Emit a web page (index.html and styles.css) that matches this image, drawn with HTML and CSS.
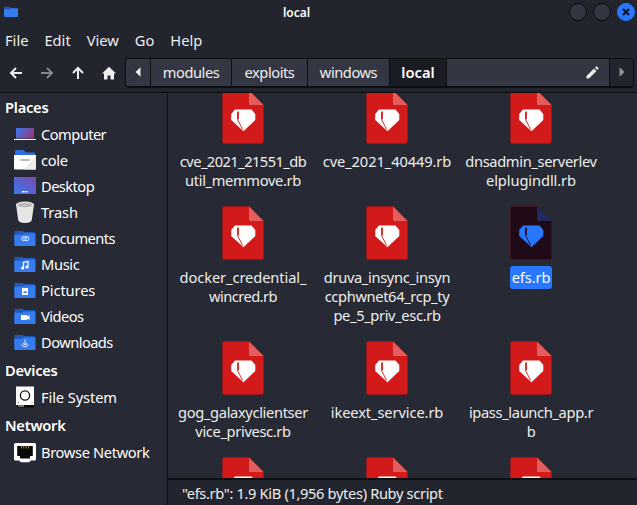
FILE: index.html
```html
<!DOCTYPE html>
<html lang="en">
<head>
<meta charset="utf-8">
<title>local</title>
<link rel="stylesheet" href="styles.css">
</head>
<body>
<svg class="defs" aria-hidden="true">
  <symbol id="ruby" viewBox="0 0 42 54">
    <path class="page" d="M2.500 .5H27L41.500 15V51.500Q41.500 53.500 39.500 53.500H2.500Q.5 53.500 .5 51.500V2.500Q.5 .5 2.500 .5Z"/>
    <path class="fold" d="M27 .5L41.500 15H28.500Q27 15 27 13.500Z"/>
    <path class="gem" d="M13 19.500H29.500L33.300 24V30L21.500 41.300L9.200 30V24Z"/>
    <path class="facet" d="M15.500 21.500V29.500L20.700 39.500M16.500 21.500V29.500"/>
  </symbol>
  <symbol id="folder" viewBox="0 0 22 16">
    <path d="M.5 1Q.5 .2 1.500 .2H8L10 1.500H21V9H.5Z" fill="#2159b8"/>
    <path d="M.3 4.300H8L10 3H21.500V14.500Q21.500 15.500 20.500 15.500H1.300Q.3 15.500 .3 14.500Z" fill="#367bf0"/>
  </symbol>
</svg>
<div class="window">
  <header class="titlebar">
    <svg class="app-icon" viewBox="0 0 14 10"><path d="M0 1Q0 0 1 0H5.500L7 1H13.500V6H0Z" fill="#2159b8"/><path d="M0 2.500H5.500L7 1.500H14V9Q14 10 13 10H1Q0 10 0 9Z" fill="#367bf0"/></svg>
    <span class="title">local</span>
    <div class="controls">
      <span class="control"></span><span class="control"></span>
      <span class="control close"><svg viewBox="0 0 8 8"><path d="M1 1L7 7M7 1L1 7" stroke="#0c1424" stroke-width="2.200"/></svg></span>
    </div>
  </header>
  <nav class="menubar"><span>File</span><span>Edit</span><span>View</span><span>Go</span><span>Help</span></nav>
  <div class="toolbar">
    <svg class="nav" viewBox="0 0 14 14"><path d="M13 7H3M7 2L2 7L7 12"/></svg>
    <svg class="nav dim" viewBox="0 0 14 14"><path d="M1 7H11M7 2L12 7L7 12"/></svg>
    <svg class="nav" viewBox="0 0 14 14"><path d="M7 13V3M2 7L7 2L12 7"/></svg>
    <svg class="nav home" viewBox="0 0 14 14"><path d="M7 .8L14 7.500H12V13.500H8.500V9.500H5.500V13.500H2V7.500H0Z"/></svg>
    <div class="pathbar">
      <span class="seg back"><svg viewBox="0 0 6 10"><path d="M5.500 .2V9.800L.5 5Z" fill="#eee"/></svg></span>
      <span class="seg modules">modules</span>
      <span class="seg exploits">exploits</span>
      <span class="seg windows">windows</span>
      <span class="seg current">local</span>
      <span class="seg entry"><svg viewBox="0 0 13 13"><path d="M.5 10L8 2.500L10.500 5L3 12.500H.5ZM9 1.500L10 .6Q10.500 .2 11 .6L12.400 2Q12.800 2.500 12.400 3L11.500 4Z" fill="#eee"/></svg></span>
      <span class="seg forward"><svg viewBox="0 0 6 10"><path d="M.5 .2V9.800L5.500 5Z" fill="#929397"/></svg></span>
    </div>
  </div>
  <div class="body">
    <aside class="sidebar">
      <h2>Places</h2>
      <ul>
        <li class="tight"><svg viewBox="0 0 22 22"><defs><linearGradient id="g" x2="1" y2=".4"><stop stop-color="#367bf0"/><stop offset="1" stop-color="#8c3a88"/></linearGradient></defs><path d="M2 5H20V15.500H2Z" fill="url(#g)"/><path d="M0 16H22V17H0Z" fill="#fff"/></svg>Computer</li>
        <li><svg viewBox="0 0 22 22"><path d="M1 7V2Q1 1 2 1H9.500L12 3.500H21V7Z" fill="#2c6fe0"/><path d="M0 6H22V19.500Q22 20.500 21 20.500H1Q0 20.500 0 19.500Z" fill="#fff"/><path d="M22 7V20.500H10Z" fill="#ececec"/><path d="M7 11H15" stroke="#bbb" stroke-width="2" stroke-linecap="round"/></svg>cole</li>
        <li class="tight"><svg viewBox="0 0 22 22"><defs><linearGradient id="d" x1="0" y1="1" x2="1" y2="0"><stop stop-color="#367bf0"/><stop offset="1" stop-color="#7b49ad"/></linearGradient></defs><path d="M0 2H22V19H0Z" fill="url(#d)"/><path d="M8 16H10V17.500H8ZM10.500 16H12V17.500H10.500ZM12.500 16H14V17.500H12.500Z" fill="#fff"/></svg>Desktop</li>
        <li class="wide"><svg viewBox="0 0 22 22"><path d="M2 3L4.200 19Q5 22 11 22T17.800 19L20 3Z" fill="#e6e6e6"/><ellipse cx="11" cy="3.700" rx="9" ry="3.200" fill="#f4f4f4"/><ellipse cx="11" cy="4" rx="8" ry="2.400" fill="#b9b9b9"/></svg>Trash</li>
        <li class="tight"><svg viewBox="0 0 22 22"><use href="#folder" y="3.500" width="22" height="16"/><path d="M9 10H14.500Q15.500 12 14 13.500H8.500Q6.500 12 8 10.200Q10 9 14 10.500M9 12H13" fill="none" stroke="#d5e3fc"/></svg>Documents</li>
        <li><svg viewBox="0 0 22 22"><use href="#folder" y="3.500" width="22" height="16"/><path d="M9.500 15V9.500L14 8.500V14" fill="none" stroke="#fff" stroke-width="1.200"/><circle cx="8.700" cy="15" r="1.600" fill="#fff"/><circle cx="13" cy="14" r="1.600" fill="#fff"/></svg>Music</li>
        <li class="wide"><svg viewBox="0 0 22 22"><use href="#folder" y="3.500" width="22" height="16"/><path d="M8 9H14V16H8Z" fill="#fff"/><path d="M9 14L10.300 12L11 13L12 11.500L13 14Z" fill="#367bf0"/></svg>Pictures</li>
        <li class="tight"><svg viewBox="0 0 22 22"><use href="#folder" y="3.500" width="22" height="16"/><path d="M7 10H13V11.500L15.500 10V15L13 13.500V15H7Z" fill="#fff"/></svg>Videos</li>
        <li class="tight"><svg viewBox="0 0 22 22"><use href="#folder" y="3.500" width="22" height="16"/><path d="M11 8.500V14M9 12L11 14L13 12M8 13Q8.500 15.700 11 15.700T14 13" fill="none" stroke="#e5eefe"/></svg>Downloads</li>
      </ul>
      <h2>Devices</h2>
      <ul><li class="wide"><svg viewBox="0 0 22 22"><path d="M2 .5H20V19H2Z" fill="#fff"/><path d="M3 19H20V21.500H3Z" fill="#0b0b0b"/><path d="M4 20H10" stroke="#ddd"/><circle cx="11" cy="9.500" r="4.600" fill="#fff" stroke="#111" stroke-width="1.300"/><path d="M4 16.500H5M17.500 16.500H18.500" stroke="#777"/></svg>File System</li></ul>
      <h2>Network</h2>
      <ul><li><svg viewBox="0 0 22 22"><path d="M1.500 2H20.500Q22 2 22 3.500V18Q22 19.500 20.500 19.500H17L15 21.300H7L5 19.500H1.500Q0 19.500 0 18V3.500Q0 2 1.500 2Z" fill="#fff"/><path d="M3.200 5H18.800V15H16V17.500H6V15H3.200Z" fill="#080808"/><path d="M7.500 5V7.500M9.800 5V7.500M12.100 5V7.500M14.400 5V7.500" stroke="#a9822c"/></svg>Browse Network</li></ul>
    </aside>
    <main class="content">
      <div class="grid">
        <figure><svg><use href="#ruby"/></svg><figcaption><span class="tight">cve_2021_21551_db</span><br>util_memmove.rb</figcaption></figure>
        <figure><svg><use href="#ruby"/></svg><figcaption class="wide">cve_2021_40449.rb</figcaption></figure>
        <figure><svg><use href="#ruby"/></svg><figcaption>dnsadmin_serverlev<br><span class="wide">elplugindll.rb</span></figcaption></figure>
        <figure><svg><use href="#ruby"/></svg><figcaption><span class="wide">docker_credential_</span><br><span class="tight">wincred.rb</span></figcaption></figure>
        <figure><svg><use href="#ruby"/></svg><figcaption>druva_insync_insyn<br>ccphwnet64_rcp_ty<br>pe_5_priv_esc.rb</figcaption></figure>
        <figure class="selected"><svg><use href="#ruby"/></svg><figcaption>efs.rb</figcaption></figure>
        <figure><svg><use href="#ruby"/></svg><figcaption>gog_galaxyclientser<br>vice_privesc.rb</figcaption></figure>
        <figure><svg><use href="#ruby"/></svg><figcaption class="wide">ikeext_service.rb</figcaption></figure>
        <figure><svg><use href="#ruby"/></svg><figcaption>ipass_launch_app.r<br>b</figcaption></figure>
        <figure><svg><use href="#ruby"/></svg></figure>
        <figure><svg><use href="#ruby"/></svg></figure>
        <figure><svg><use href="#ruby"/></svg></figure>
      </div>
      <footer class="status">"efs.rb": 1.9 KiB (1,956 bytes) Ruby script</footer>
    </main>
  </div>
</div>
</body>
</html>
```
FILE: styles.css
```css
* { box-sizing: border-box; margin: 0; padding: 0; }
body {
  width: 637px; height: 505px; overflow: hidden;
  background: #23252e; color: #eeeeec;
  font: 14.67px/19px "Noto Sans", sans-serif;
}
.defs { display: none; }
.window { display: flex; flex-direction: column; height: 505px; }

.titlebar { display: flex; align-items: center; height: 24px; padding: 0 2px 0 4px; }
.app-icon { width: 14px; height: 10px; }
.title { flex: 1; text-align: center; font-size: 12px; font-weight: 600; padding-left: 6px; color: #fff; }
.controls { display: flex; gap: 6px; }
.control {
  display: flex; align-items: center; justify-content: center;
  width: 18px; height: 18px; border: 1px solid #0a0b0e; border-radius: 50%; background: #343743;
}
.control.close { background: #2777ff; border-color: #2777ff; }
.control svg { width: 8px; height: 8px; }

.menubar { display: flex; gap: 16px; height: 29px; padding: 7px 5px 0; }

.toolbar { display: flex; align-items: center; height: 40px; padding: 0 3px 0 9px; border-bottom: 1px solid #0d0e12; }
.nav { width: 14px; height: 14px; margin-right: 17px; fill: none; stroke: #eeeeec; stroke-width: 2; }
.nav.dim { stroke: #85868a; }
.nav.home { fill: #eeeeec; stroke: none; margin-right: 9px; }
.pathbar { display: flex; flex: 1; height: 30px; border: 1px solid #0d0e12; border-bottom-width: 2px; border-radius: 4px; overflow: hidden; letter-spacing: -.45px; }
.seg { display: flex; align-items: center; justify-content: center; background: #343743; border-right: 1px solid #0d0e12; }
.seg svg { width: 6px; height: 10px; }
.back { width: 25px; }
.modules { width: 81px; }
.exploits { width: 76px; }
.windows { width: 82px; }
.current { width: 57px; background: #1a1c23; font-weight: 600; color: #fff; letter-spacing: 0; }
.entry { flex: 1; justify-content: flex-end; padding-right: 10px; }
.entry svg { width: 13px; height: 13px; }
.forward { width: 23px; background: #23252e; border-right: 0; }

.body { display: flex; flex: 1; min-height: 0; background: #272a34; }
.sidebar { width: 168px; border-right: 1px solid #0d0e12; padding-top: 2px; color: #fff; letter-spacing: -.35px; }
.sidebar h2 { height: 26px; padding-left: 5px; font-size: 14.67px; line-height: 24px; font-weight: 600; letter-spacing: -.25px; }
.sidebar ul { list-style: none; padding-bottom: 3px; }
.sidebar li { display: flex; align-items: center; height: 26px; gap: 5px; padding-left: 14px; }
.sidebar li svg { width: 22px; height: 22px; }

.content { flex: 1; display: flex; flex-direction: column; min-width: 0; letter-spacing: -.35px; }
.grid {
  flex: 1; min-height: 0; overflow: hidden; padding-left: 3px;
  display: grid; grid-template-columns: repeat(3, 144px); grid-template-rows: 116px 135px 116px 60px;
  margin-top: -3px; clip-path: inset(3px 0 0);
}
.grid figure {
  --page: #d31a1a; --edge: #a3181d; --fold: #e35d5f; --gem: #fff;
  display: flex; flex-direction: column; align-items: center;
}
.grid figure.selected { --page: #200a17; --edge: #4a1020; --fold: #222b60; --gem: #2777ff; }
.grid svg { width: 42px; height: 54px; margin-bottom: 8px; flex: none; }
figcaption { text-align: center; white-space: nowrap; }
.page { fill: var(--page); stroke: var(--edge); stroke-width: .6; }
.fold { fill: var(--fold); }
.gem { fill: var(--gem); }
.facet { fill: none; stroke: var(--page); stroke-width: .9; }
.selected figcaption { background: #2777ff; color: #fff; border-radius: 3px; width: 42px; height: 23px; margin-top: -2px; padding-top: 2px; letter-spacing: -.1px; }
.status { height: 27px; border-top: 2px solid #0d0e12; background: #23252e; padding: 4px 14px; }

.tight { letter-spacing: -.55px; }
.wide { letter-spacing: -.1px; }
```
